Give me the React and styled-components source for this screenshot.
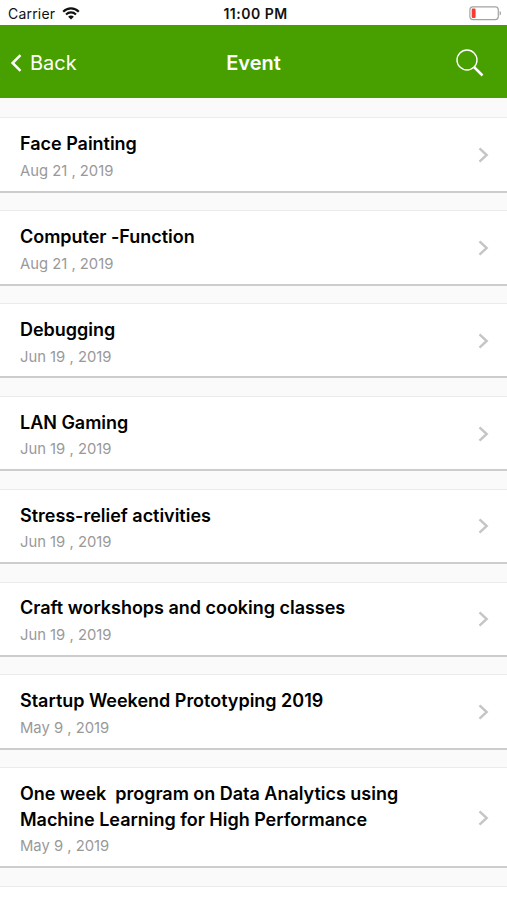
import React from "react";
import styled, { createGlobalStyle } from "styled-components";

const events = [
    { id: 1, title: "Face Painting", date: "Aug 21 , 2019" },
    { id: 2, title: "Computer -Function", date: "Aug 21 , 2019" },
    { id: 3, title: "Debugging", date: "Jun 19 , 2019" },
    { id: 4, title: "LAN Gaming", date: "Jun 19 , 2019" },
    { id: 5, title: "Stress-relief activities", date: "Jun 19 , 2019" },
    { id: 6, title: "Craft workshops and cooking classes", date: "Jun 19 , 2019" },
    { id: 7, title: "Startup Weekend Prototyping 2019", date: "May 9 , 2019" },
    {
        id: 8,
        title: "One week  program on Data Analytics using\nMachine Learning for High Performance",
        date: "May 9 , 2019",
    },
];

const WifiIcon = () => (
    <svg width="18" height="13" viewBox="0 0 18 13" fill="none">
        <path d="M1.2 4.7C5.6 0.3 12.4 0.3 16.8 4.7" stroke="#111" strokeWidth="2.2" />
        <path d="M4 7.5C6.9 4.7 11.1 4.7 14 7.5" stroke="#111" strokeWidth="2.1" />
        <path d="M9 12.6L6.1 9.7C7.7 8.2 10.3 8.2 11.9 9.7Z" fill="#111" />
    </svg>
);

const BatteryIcon = () => (
    <svg width="33" height="15" viewBox="0 0 33 15" fill="none">
        <rect x="0.9" y="0.9" width="28.4" height="12.7" rx="3" stroke="#a3a3a3" strokeWidth="1.2" />
        <rect x="2.7" y="2.6" width="3.9" height="9.3" rx="1.2" fill="#f93b30" />
        <path d="M30.6 5C32.5 5.7 32.5 8.8 30.6 9.5Z" fill="#a3a3a3" />
    </svg>
);

const BackIcon = () => (
    <svg width="12" height="18" viewBox="0 0 12 18" fill="none">
        <path d="M10.5 1.2L2.6 9L10.5 16.8" stroke="#fff" strokeWidth="2.5" />
    </svg>
);

const SearchIcon = () => (
    <svg width="28" height="28" viewBox="0 0 28 28" fill="none">
        <circle cx="11" cy="11" r="10" stroke="#fff" strokeWidth="1.4" />
        <path d="M18 18L26.5 26.5" stroke="#fff" strokeWidth="2.5" />
    </svg>
);

const ArrowIcon = () => (
    <svg width="11" height="16" viewBox="0 0 11 16" fill="none">
        <path d="M1.5 1.3L8.7 8L1.5 14.7" stroke="#c5c5c7" strokeWidth="2.4" />
    </svg>
);

export default function App() {
    return (
        <Container>
            <GlobalStyle />
            <StatusBar>
                <Carrier>
                    Carrier
                    <WifiIcon />
                </Carrier>
                <Time>11:00 PM</Time>
                <Battery>
                    <BatteryIcon />
                </Battery>
            </StatusBar>
            <Header>
                <BackButton>
                    <BackIcon />
                    Back
                </BackButton>
                <HeaderTitle>Event</HeaderTitle>
                <SearchButton aria-label="Search">
                    <SearchIcon />
                </SearchButton>
            </Header>
            <List>
                {events.map((event) => (
                    <Card key={event.id}>
                        <Info>
                            <Title>{event.title}</Title>
                            <EventDate>{event.date}</EventDate>
                        </Info>
                        <ArrowIcon />
                    </Card>
                ))}
                <Card />
            </List>
        </Container>
    );
}

const GlobalStyle = createGlobalStyle`
    * {
        box-sizing: border-box;
    }
    body {
        margin: 0;
        background-color: #fff;
        font-family: Inter, "Liberation Sans", sans-serif;
    }
    svg {
        display: block;
        flex-shrink: 0;
    }
`;
const Container = styled.div`
    width: 100%;
    height: 900px;
    display: flex;
    flex-direction: column;
    overflow: hidden;
`;
const StatusBar = styled.div`
    flex: none;
    height: 25px;
    display: grid;
    grid-template-columns: 1fr auto 1fr;
    align-items: center;
    padding: 2px 5px 0 8px;
    color: #111;
`;
const Carrier = styled.div`
    display: flex;
    align-items: center;
    gap: 7px;
    font-size: 14px;
    letter-spacing: 0.2px;
`;
const Time = styled.div`
    padding-left: 1px;
    font-size: 14px;
    font-weight: 600;
    letter-spacing: 0.5px;
`;
const Battery = styled.div`
    justify-self: end;
`;
const Header = styled.header`
    flex: none;
    height: 73.4px;
    display: grid;
    grid-template-columns: 1fr auto 1fr;
    align-items: center;
    padding: 2px 23px 0 10px;
    background-color: #489f00;
    color: #fff;
`;
const BackButton = styled.button`
    display: flex;
    align-items: center;
    gap: 8px;
    padding: 0;
    border: none;
    background: none;
    color: inherit;
    font-family: inherit;
    font-size: 20px;
    cursor: pointer;
`;
const HeaderTitle = styled.h1`
    margin: 0;
    padding-left: 13px;
    font-size: 20px;
    font-weight: 600;
`;
const SearchButton = styled.button`
    justify-self: end;
    padding: 0;
    border: none;
    background: none;
    cursor: pointer;
`;
const List = styled.main`
    flex: 1;
    min-height: 0;
    display: flex;
    flex-direction: column;
    gap: 17.4px;
    padding-top: 19px;
    background-color: #fafafa;
`;
const Card = styled.div`
    flex: none;
    min-height: 75.45px;
    display: flex;
    align-items: center;
    justify-content: space-between;
    padding: 1px 18px 0 20px;
    background-color: #fff;
    border-top: 1px solid #ebebeb;
    border-bottom: 2px solid #cdcdcd;

    &:nth-child(8) {
        min-height: 101px;
    }
`;
const Info = styled.div`
    padding-top: 3px;
`;
const Title = styled.h2`
    margin: 0;
    color: #000;
    font-size: 18px;
    font-weight: 600;
    line-height: 25.7px;
    letter-spacing: -0.02px;
    white-space: pre;
`;
const EventDate = styled.div`
    margin-top: 3px;
    color: #999;
    font-size: 14.8px;
    line-height: 22px;
`;
